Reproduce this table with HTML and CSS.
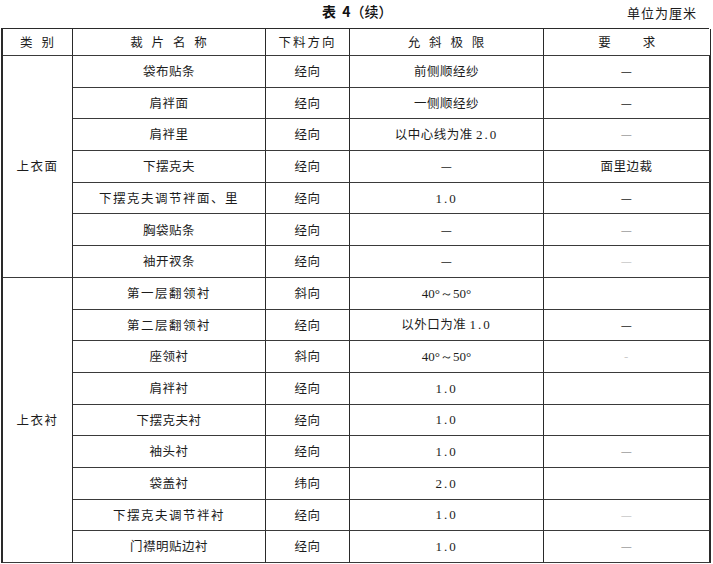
FILE: index.html
```html
<!DOCTYPE html>
<html lang="zh">
<head>
<meta charset="utf-8">
<title>表 4（续）</title>
<link rel="stylesheet" href="styles.css">
</head>
<body>
<div class="page">
  <div class="caption">
    <div class="title"><span class="t-b">表 4</span><span class="t-c">（续）</span></div>
    <div class="unit">单位为厘米</div>
  </div>
  <div class="grid">
    <div class="c h sp2">类 别</div>
    <div class="c h sp2">裁 片 名 称</div>
    <div class="c h sp1">下料方向</div>
    <div class="c h sp2">允 斜 极 限</div>
    <div class="c h sp6">要 求</div>

    <div class="c cat cat1">上衣面</div>
    <div class="c">袋布贴条</div><div class="c">经向</div><div class="c">前侧顺经纱</div><div class="c r">—</div>
    <div class="c">肩袢面</div><div class="c">经向</div><div class="c">一侧顺经纱</div><div class="c r">—</div>
    <div class="c">肩袢里</div><div class="c">经向</div><div class="c"><span class="mix">以中心线为准 <span class="num">2.0</span></span></div><div class="c r faint">—</div>
    <div class="c">下摆克夫</div><div class="c">经向</div><div class="c">—</div><div class="c r">面里边裁</div>
    <div class="c wide">下摆克夫调节袢面、里</div><div class="c">经向</div><div class="c"><span class="num">1.0</span></div><div class="c r">—</div>
    <div class="c">胸袋贴条</div><div class="c">经向</div><div class="c">—</div><div class="c r faint">—</div>
    <div class="c">袖开衩条</div><div class="c">经向</div><div class="c">—</div><div class="c r faint2">—</div>

    <div class="c cat cat2">上衣衬</div>
    <div class="c wide">第一层翻领衬</div><div class="c">斜向</div><div class="c"><span class="num deg">40°～50°</span></div><div class="c r"></div>
    <div class="c wide">第二层翻领衬</div><div class="c">经向</div><div class="c"><span class="mix">以外口为准 <span class="num">1.0</span></span></div><div class="c r">—</div>
    <div class="c">座领衬</div><div class="c">斜向</div><div class="c"><span class="num deg">40°～50°</span></div><div class="c r faint2">-</div>
    <div class="c">肩袢衬</div><div class="c">经向</div><div class="c"><span class="num">1.0</span></div><div class="c r"></div>
    <div class="c">下摆克夫衬</div><div class="c">经向</div><div class="c"><span class="num">1.0</span></div><div class="c r"></div>
    <div class="c">袖头衬</div><div class="c">经向</div><div class="c"><span class="num">1.0</span></div><div class="c r faint">—</div>
    <div class="c">袋盖衬</div><div class="c">纬向</div><div class="c"><span class="num">2.0</span></div><div class="c r"></div>
    <div class="c wide">下摆克夫调节袢衬</div><div class="c">经向</div><div class="c"><span class="num">1.0</span></div><div class="c r faint2">—</div>
    <div class="c">门襟明贴边衬</div><div class="c">经向</div><div class="c"><span class="num">1.0</span></div><div class="c r faint">—</div>
  </div>
</div>
</body>
</html>
```
FILE: styles.css
```css
html, body {
  margin: 0;
  padding: 0;
  background: #ffffff;
}
body {
  font-family: "Noto Sans CJK SC", "Noto Sans", sans-serif;
  color: #1c1c1c;
  font-size: 12.5px;
  width: 713px;
  height: 564px;
  overflow: hidden;
}
.page {
  width: 713px;
}
.caption {
  height: 28px;
  display: flex;
  align-items: flex-start;
}
.title {
  margin-left: 322px;
  margin-top: 2px;
  font-size: 14px;
  line-height: 18px;
  color: #111;
}
.t-b {
  font-weight: bold;
  word-spacing: 3px;
}
.t-c {
  font-weight: 500;
}
.unit {
  margin-left: auto;
  margin-right: 16px;
  margin-top: 5px;
  font-size: 13px;
  line-height: 16px;
  letter-spacing: 1px;
}
.grid {
  margin-left: 1px;
  width: 708px;
  display: grid;
  grid-template-columns: 70px 193px 84px 194px 167px;
  grid-template-rows: 27px repeat(16, 31.7px);
  border-left: 2px solid #2a2a2a;
  border-top: 1px solid #2a2a2a;
  box-sizing: border-box;
}
.c {
  box-sizing: border-box;
  border-right: 1px solid #2a2a2a;
  border-bottom: 1px solid #3a3a3a;
  display: flex;
  align-items: center;
  justify-content: center;
  line-height: 1;
  white-space: nowrap;
  letter-spacing: 0.5px;
}
.c.r {
  border-right: 2px solid #2a2a2a;
}
.h.sp1 {
  letter-spacing: 2px;
}
.h.sp2 {
  word-spacing: 4px;
  letter-spacing: 1px;
}
.h.sp6 {
  word-spacing: 28px;
}
.wide {
  letter-spacing: 1.5px;
}
.cat {
  letter-spacing: 1.5px;
}
.cat1 {
  grid-row: span 7;
}
.cat2 {
  grid-row: span 9;
}
.mix {
  white-space: pre;
}
.num {
  font-family: "Liberation Serif", "DejaVu Serif", serif;
  font-size: 13px;
  letter-spacing: 2px;
}
.num.deg {
  letter-spacing: 0;
}
.faint {
  color: #9a9a9a;
}
.faint2 {
  color: #c8c8c8;
}
```
